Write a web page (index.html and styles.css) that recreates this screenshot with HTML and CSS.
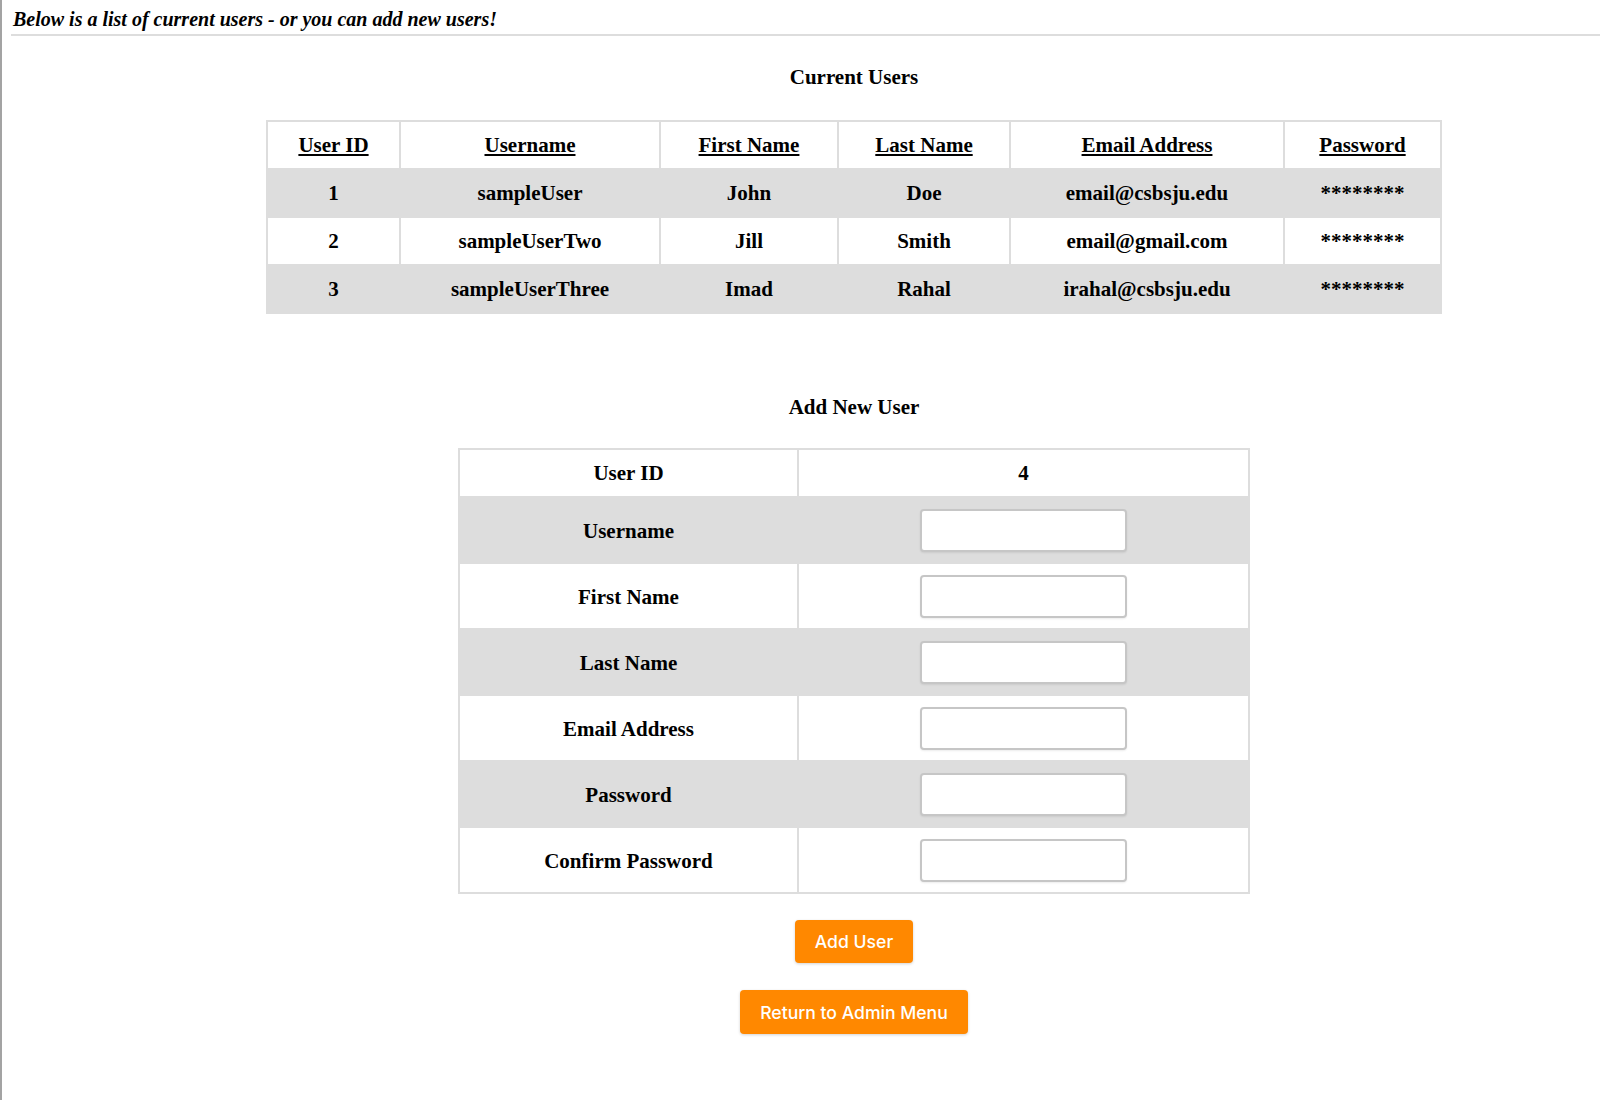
FILE: index.html
```html
<!DOCTYPE html>
<html lang="en">
<head>
<meta charset="utf-8">
<title>Users</title>
<link rel="stylesheet" href="styles.css">
</head>
<body>
<p class="intro">Below is a list of current users - or you can add new users!</p>
<main class="main">
  <h2 class="title title-first">Current Users</h2>
  <table class="users">
    <colgroup>
      <col class="c-id"><col class="c-user"><col class="c-first"><col class="c-last"><col class="c-email"><col class="c-pass">
    </colgroup>
    <thead>
      <tr><th><u>User ID</u></th><th><u>Username</u></th><th><u>First Name</u></th><th><u>Last Name</u></th><th><u>Email Address</u></th><th><u>Password</u></th></tr>
    </thead>
    <tbody>
      <tr><td>1</td><td>sampleUser</td><td>John</td><td>Doe</td><td>email@csbsju.edu</td><td>********</td></tr>
      <tr><td>2</td><td>sampleUserTwo</td><td>Jill</td><td>Smith</td><td>email@gmail.com</td><td>********</td></tr>
      <tr><td>3</td><td>sampleUserThree</td><td>Imad</td><td>Rahal</td><td>irahal@csbsju.edu</td><td>********</td></tr>
    </tbody>
  </table>

  <h2 class="title title-second">Add New User</h2>
  <table class="form">
    <colgroup><col class="f-label"><col class="f-field"></colgroup>
    <tbody>
      <tr class="id-row"><td>User ID</td><td>4</td></tr>
      <tr><td>Username</td><td><input class="field" type="text"></td></tr>
      <tr><td>First Name</td><td><input class="field" type="text"></td></tr>
      <tr><td>Last Name</td><td><input class="field" type="text"></td></tr>
      <tr><td>Email Address</td><td><input class="field" type="text"></td></tr>
      <tr><td>Password</td><td><input class="field" type="password"></td></tr>
      <tr><td>Confirm Password</td><td><input class="field" type="password"></td></tr>
    </tbody>
  </table>

  <div class="actions">
    <button class="btn btn-add" type="button">Add User</button>
    <button class="btn btn-return" type="button">Return to Admin Menu</button>
  </div>
</main>
</body>
</html>
```

FILE: styles.css
```css
html, body {
  margin: 0;
  padding: 0;
}
body {
  min-height: 100vh;
  box-sizing: border-box;
  border-left: 2px solid #a3a3a3;
  font-family: "Liberation Serif", "Times New Roman", serif;
  color: #000;
  background: #fff;
  overflow-x: hidden;
}
.intro {
  margin: 8px 0 0 9px;
  padding: 0 0 4px 2px;
  font-size: 20px;
  line-height: 22px;
  font-weight: bold;
  font-style: italic;
  border-bottom: 2px solid #dddddd;
}
.main {
  padding-left: 106px;
  text-align: center;
}
.title {
  font-size: 21px;
  line-height: 24px;
  font-weight: bold;
  margin: 0;
}
.title-first {
  margin-top: 29px;
  margin-bottom: 31px;
}
.title-second {
  margin-top: 81px;
  margin-bottom: 29px;
}
table {
  border-collapse: collapse;
  margin: 0 auto;
  table-layout: fixed;
  font-size: 21px;
  font-weight: bold;
}
td, th {
  border: 2px solid #dddddd;
  text-align: center;
  vertical-align: middle;
}
.users {
  width: 1174px;
}
.users th, .users td {
  padding: 11px 6px;
  line-height: 24px;
}
.users th u {
  text-decoration-thickness: 1.5px;
  text-underline-offset: 2px;
}
.users tbody tr:nth-child(odd) {
  background: #dddddd;
}
.c-id { width: 133px; }
.c-user { width: 260px; }
.c-first { width: 178px; }
.c-last { width: 172px; }
.c-email { width: 274px; }
.c-pass { width: 157px; }

.form {
  width: 790px;
}
.f-label { width: 339px; }
.f-field { width: 451px; }
.form td {
  padding: 11px 6px 10px;
  line-height: 24px;
}
.form .id-row td {
  padding: 11px 6px;
}
.form tr:nth-child(even) {
  background: #dddddd;
}
.field {
  display: block;
  margin: 0 auto;
  width: 207px;
  height: 43px;
  box-sizing: border-box;
  border: 2px solid #c6c6c6;
  border-radius: 4px;
  background: #fff;
  box-shadow: 0 1px 2px rgba(0, 0, 0, 0.08);
  font-size: 16px;
}
.actions {
  display: flex;
  flex-direction: column;
  align-items: center;
  gap: 27px;
  margin-top: 26px;
}
.btn {
  background: #ff8800;
  color: #fff;
  border: none;
  border-radius: 4px;
  padding: 0 20px;
  height: 43px;
  font-family: Inter, "Noto Sans", sans-serif;
  font-size: 17.6px;
  font-weight: 500;
  box-shadow: 0 1px 3px rgba(0, 0, 0, 0.18);
  cursor: pointer;
}
.btn-return {
  height: 44px;
}
```
